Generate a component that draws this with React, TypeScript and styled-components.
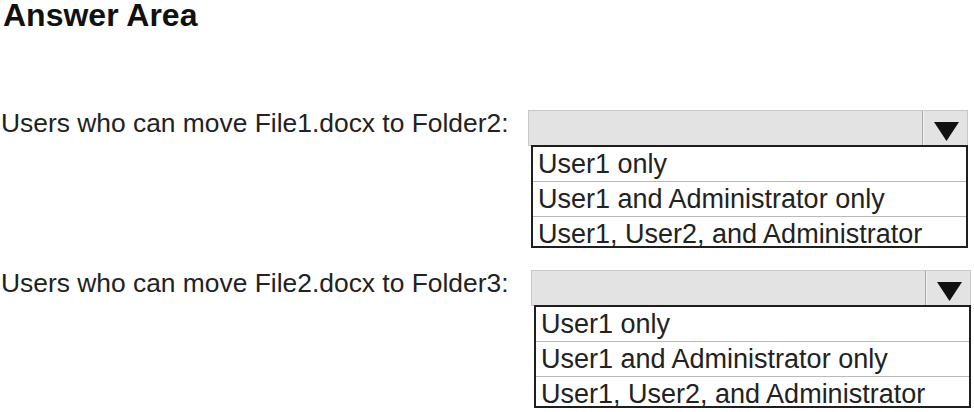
import styled, { createGlobalStyle } from "styled-components";

const GlobalStyle = createGlobalStyle`
  body {
    margin: 0;
    background: #ffffff;
    font-family: "Liberation Sans", Arial, sans-serif;
    color: #222;
  }
`;

const Page = styled.main`
  padding-left: 1px;
  width: 974px;
  height: 412px;
  overflow: hidden;
`;

const Heading = styled.h1`
  margin: 0 0 0 2px;
  font-size: 32px;
  line-height: 31px;
  font-weight: bold;
  color: #111;
`;

const Questions = styled.div`
  margin-top: 79px;
  display: flex;
  flex-direction: column;
  gap: 22px;
`;

const Row = styled.div`
  display: grid;
  grid-template-columns: 527px 1fr;
  align-items: start;
`;

const Label = styled.div`
  font-size: 26.4px;
  line-height: 26px;
  white-space: nowrap;
  color: #222;
`;

const Dropdown = styled.div<{ $offset: number }>`
  margin-left: ${(p) => p.$offset}px;
  width: 440px;
  display: flex;
  flex-direction: column;
`;

const Bar = styled.div`
  height: 36px;
  box-sizing: border-box;
  background: #e3e3e3;
  border: 1px solid #c8c8c8;
  display: flex;
  justify-content: flex-end;
`;

const ArrowBox = styled.div`
  width: 45px;
  border-left: 1px solid #a9a9a9;
  box-shadow: inset 1px 0 0 #f2f2f2;
  display: flex;
  justify-content: center;
  padding: 11px 0 0 2px;
  box-sizing: border-box;
`;

const List = styled.ul`
  list-style: none;
  margin: -1px 0 0 3px;
  padding: 0;
  width: 437px;
  box-sizing: border-box;
  border: 2px solid #1f1f1f;
  background: #fff;
`;

const Option = styled.li`
  height: 35px;
  box-sizing: border-box;
  padding-left: 5px;
  font-size: 27px;
  line-height: 34px;
  color: #222;
  white-space: nowrap;
  border-bottom: 1px solid #b9b9b9;

  &:last-child {
    height: 29px;
    border-bottom: none;
  }
`;

const Arrow = () => (
  <svg width="25" height="19" viewBox="0 0 25 19">
    <polygon points="0,0 25,0 12.5,19" fill="#111" />
  </svg>
);

const options = [
  "User1 only",
  "User1 and Administrator only",
  "User1, User2, and Administrator",
];

const questions = [
  { label: "Users who can move File1.docx to Folder2:", offset: 0 },
  { label: "Users who can move File2.docx to Folder3:", offset: 3 },
];

export default function App() {
  return (
    <>
      <GlobalStyle />
      <Page>
        <Heading>Answer Area</Heading>
        <Questions>
          {questions.map((q) => (
            <Row key={q.label}>
              <Label>{q.label}</Label>
              <Dropdown $offset={q.offset}>
                <Bar>
                  <ArrowBox>
                    <Arrow />
                  </ArrowBox>
                </Bar>
                <List>
                  {options.map((o) => (
                    <Option key={o}>{o}</Option>
                  ))}
                </List>
              </Dropdown>
            </Row>
          ))}
        </Questions>
      </Page>
    </>
  );
}
